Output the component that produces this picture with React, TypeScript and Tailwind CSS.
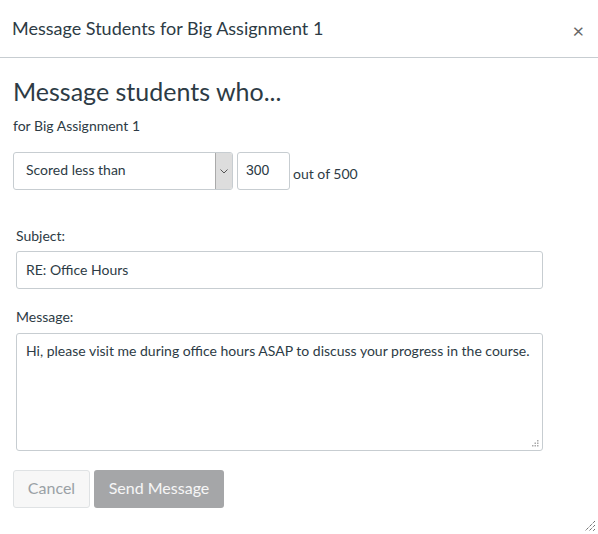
import React from "react";

export default function App() {
  return (
    <div className="relative w-[598px] h-[534px] bg-white text-[#2d3b45] overflow-hidden" style={{ fontFamily: "Lato, 'Noto Sans', sans-serif" }}>
      <div className="flex items-center justify-between h-[58px] border-b border-[#c7cdd1] pl-[12px] pr-[14px]">
        <div className="text-[18px] text-[#2d3b45] leading-none -mt-[1px]">Message Students for Big Assignment 1</div>
        <div className="text-[20px] text-[#666] leading-none mt-[2px]">×</div>
      </div>
      <div className="px-[13px]">
        <h1 className="text-[25px] leading-none mt-[21px] font-normal">Message students who...</h1>
        <div className="text-[14px] mt-[15px] leading-none">for Big Assignment 1</div>
        <div className="flex items-end mt-[19px]">
          <div className="flex w-[220px] h-[38px] border border-[#c7cdd1] rounded-[3px] overflow-hidden">
            <div className="flex-1 flex items-center pl-[12px] text-[14px] pb-[3px]">Scored less than</div>
            <div className="w-[17px] bg-[#dddddd] border-l border-[#aaa] flex items-center justify-center">
              <svg width="8" height="5" viewBox="0 0 8 5"><path d="M0.5 0.5 L4 4 L7.5 0.5" fill="none" stroke="#555" strokeWidth="1" /></svg>
            </div>
          </div>
          <div className="ml-[4px] w-[53px] h-[38px] border border-[#c7cdd1] rounded-[3px] flex items-center pl-[8px] text-[14px] pb-[2px]" style={{ fontFamily: "'Liberation Sans', Arial, sans-serif" }}>300</div>
          <div className="ml-[3px] mb-[9px] text-[14px] leading-none">out of 500</div>
        </div>
        <div className="pl-[3px]">
          <div className="text-[14px] mt-[39px] leading-none">Subject:</div>
          <div className="mt-[8px] w-[527px] h-[38px] border border-[#c7cdd1] rounded-[3px] flex items-center pl-[9px] pb-[2px] text-[14px]">RE: Office Hours</div>
          <div className="text-[14px] mt-[21px] leading-none">Message:</div>
          <div className="relative mt-[9px] w-[527px] h-[118px] border border-[#c7cdd1] rounded-[3px] pl-[9px] pt-[7px] text-[14px] leading-[20px]">
            Hi, please visit me during office hours ASAP to discuss your progress in the course.
            <svg className="absolute right-[3px] bottom-[3px]" width="7" height="7" viewBox="0 0 7 7">
              <rect x="5" y="0" width="1.5" height="1.5" fill="#aaa" />
              <rect x="2.5" y="2.5" width="1.5" height="1.5" fill="#aaa" />
              <rect x="5" y="2.5" width="1.5" height="1.5" fill="#aaa" />
              <rect x="0" y="5" width="1.5" height="1.5" fill="#aaa" />
              <rect x="2.5" y="5" width="1.5" height="1.5" fill="#aaa" />
              <rect x="5" y="5" width="1.5" height="1.5" fill="#aaa" />
            </svg>
          </div>
        </div>
        <div className="flex gap-[4px] mt-[19px]">
          <div className="w-[77px] h-[38px] border border-[#dfe2e4] bg-[#f7f7f7] rounded-[3px] flex items-center justify-center pb-[2px] text-[16px] text-[#9aa1a6]">Cancel</div>
          <div className="w-[130px] h-[38px] bg-[#a5a6a8] rounded-[3px] flex items-center justify-center pb-[2px] text-[16px] text-white/90">Send Message</div>
        </div>
      </div>
      <svg className="absolute right-[2px] bottom-[2px]" width="12" height="12" viewBox="0 0 12 12">
        <path d="M11 1 L1 11 M11 5 L5 11 M11 9 L9 11" stroke="#333" strokeWidth="1" strokeDasharray="1 1" fill="none" />
      </svg>
    </div>
  );
}
